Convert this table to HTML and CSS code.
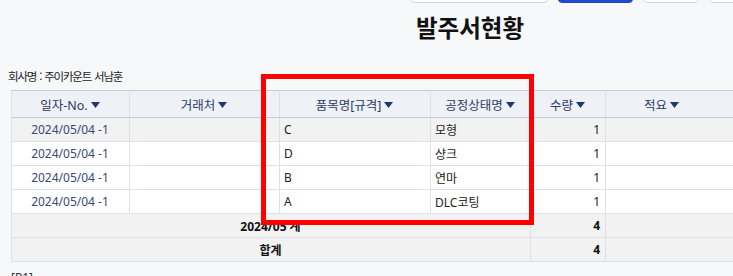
FILE: index.html
```html
<!DOCTYPE html>
<html lang="ko">
<head>
<meta charset="utf-8">
<link rel="stylesheet" href="styles.css">
</head>
<body>
<div class="page">
  <div class="toolbar">
    <span class="btn btn-wide"></span>
    <span class="btn btn-primary"></span>
    <span class="btn btn-small"></span>
    <span class="btn btn-small"></span>
  </div>
  <h1 class="title">발주서현황</h1>
  <div class="company">회사명 : 주이카운트 서남훈</div>
  <table class="grid">
    <colgroup>
      <col class="c-date"><col class="c-cust"><col class="c-item"><col class="c-state"><col class="c-qty"><col class="c-memo">
    </colgroup>
    <thead>
      <tr>
        <th>일자-No.<svg class="sort" viewBox="0 0 9 6"><path d="M0 0H9L4.5 6Z"/></svg></th>
        <th>거래처<svg class="sort" viewBox="0 0 9 6"><path d="M0 0H9L4.5 6Z"/></svg></th>
        <th>품목명[규격]<svg class="sort" viewBox="0 0 9 6"><path d="M0 0H9L4.5 6Z"/></svg></th>
        <th>공정상태명<svg class="sort" viewBox="0 0 9 6"><path d="M0 0H9L4.5 6Z"/></svg></th>
        <th>수량<svg class="sort" viewBox="0 0 9 6"><path d="M0 0H9L4.5 6Z"/></svg></th>
        <th class="memo-head">적요<svg class="sort" viewBox="0 0 9 6"><path d="M0 0H9L4.5 6Z"/></svg></th>
      </tr>
    </thead>
    <tbody>
      <tr class="hl">
        <td class="date">2024/05/04 -1</td><td></td><td>C</td><td>모형</td><td class="num">1</td><td></td>
      </tr>
      <tr>
        <td class="date">2024/05/04 -1</td><td></td><td>D</td><td>샹크</td><td class="num">1</td><td></td>
      </tr>
      <tr>
        <td class="date">2024/05/04 -1</td><td></td><td>B</td><td>연마</td><td class="num">1</td><td></td>
      </tr>
      <tr>
        <td class="date">2024/05/04 -1</td><td></td><td>A</td><td>DLC코팅</td><td class="num">1</td><td></td>
      </tr>
      <tr class="sum">
        <td colspan="4" class="sum-label">2024/05 계</td><td class="num">4</td><td></td>
      </tr>
      <tr class="sum">
        <td colspan="4" class="sum-label">합계</td><td class="num">4</td><td></td>
      </tr>
    </tbody>
  </table>
  <div class="page-no">[P1]</div>
  <div class="mark"></div>
</div>
</body>
</html>
```

FILE: styles.css
```css
html, body {
  margin: 0;
  padding: 0;
  background: #f7f8fa;
}
body {
  font-family: "Noto Sans", "Noto Sans CJK KR", sans-serif;
  color: #222;
}
.page {
  position: relative;
  width: 924px;
  padding-left: 8px;
}
.toolbar {
  display: flex;
  align-items: flex-end;
  height: 3px;
  overflow: hidden;
  padding-left: 402px;
  gap: 10px;
}
.btn {
  display: block;
  height: 20px;
  flex: none;
  box-sizing: border-box;
  border: 1px solid #d3d7df;
  border-radius: 4px;
  background: #fff;
}
.btn-wide { width: 138px; }
.btn-primary { width: 75px; background: #2148d1; border-color: #2148d1; }
.btn-small { width: 56px; }
.title {
  margin: 7px 0 0;
  font-family: "Noto Sans CJK KR", sans-serif;
  font-size: 23.5px;
  line-height: 34px;
  font-weight: 700;
  text-align: center;
  color: #111;
}
.company {
  margin-top: 24px;
  font-family: "Noto Sans CJK KR", sans-serif;
  font-size: 11.5px;
  line-height: 16px;
  letter-spacing: -1.2px;
  word-spacing: 1px;
  color: #222;
}
.grid {
  margin: 6px 0 0 3px;
  width: 918px;
  border-collapse: collapse;
  table-layout: fixed;
  font-size: 12px;
  background: #fff;
}
.c-date { width: 118px; }
.c-cust { width: 150px; }
.c-item { width: 151px; }
.c-state { width: 100px; }
.c-qty { width: 75px; }
.grid th, .grid td {
  border: 1px solid #dde0e6;
  padding: 0 5px 0 4px;
  white-space: nowrap;
  overflow: hidden;
}
.grid th {
  height: 26px;
  background: #eef1f6;
  color: #2b3a67;
  font-weight: 400;
  font-size: 12.5px;
  text-align: center;
  border-top-color: #c3cbd9;
  border-bottom-color: #c3cbd9;
}
.grid th.memo-head {
  text-align: left;
  padding-left: 38px;
}
.sort {
  width: 9px;
  height: 6px;
  margin-left: 3px;
  vertical-align: 2px;
  fill: #22366e;
}
.grid td {
  height: 23px;
  color: #222;
}
.grid td.date {
  text-align: center;
  color: #3a4878;
}
.grid td.num { text-align: right; }
.grid tr.hl td { background: #f2f2f2; }
.grid tr.sum td {
  background: #f2f2f2;
  font-weight: 700;
  color: #111;
}
.grid td.sum-label { text-align: center; }
.page-no {
  margin: 8px 0 0 3px;
  font-size: 12px;
  line-height: 16px;
  color: #333;
}
.mark {
  position: absolute;
  left: 261px;
  top: 74px;
  width: 273px;
  height: 151px;
  box-sizing: border-box;
  border: 5px solid #ff0000;
  pointer-events: none;
}
```
